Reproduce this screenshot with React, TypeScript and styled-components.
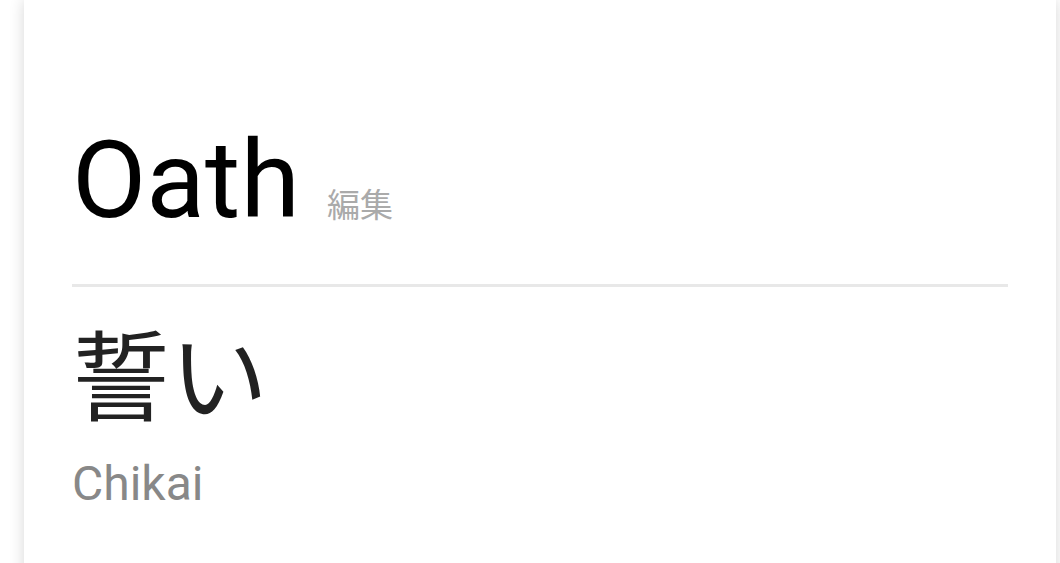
import React from "react";
import styled, { createGlobalStyle } from "styled-components";

const GlobalStyle = createGlobalStyle`
  html, body {
    margin: 0;
    padding: 0;
    background: #ffffff;
    overflow: hidden;
  }
  body {
    font-family: Roboto, "Noto Sans CJK JP", sans-serif;
  }
`;

const Page = styled.div`
  width: 1060px;
  height: 563px;
  overflow: hidden;
  background: #ffffff;
`;

const Card = styled.main`
  margin-left: 24px;
  width: 1032px;
  min-height: 700px;
  background: #ffffff;
  box-shadow: 0 0 14px rgba(0, 0, 0, 0.16);
  box-sizing: border-box;
  padding: 126px 48px 0 48px;
`;

const Header = styled.header`
  display: flex;
  align-items: baseline;
  gap: 27px;
`;

const Title = styled.h1`
  margin: 0;
  font-family: Roboto, sans-serif;
  font-weight: 400;
  font-size: 108px;
  line-height: 1;
  color: #000000;
`;

const EditLink = styled.a`
  font-family: "Noto Sans CJK JP", sans-serif;
  font-size: 33px;
  line-height: 1;
  color: #aaaaaa;
  text-decoration: none;
  cursor: pointer;
`;

const Divider = styled.hr`
  margin: 50px 0 0 0;
  border: none;
  height: 3px;
  background: #e8e8e8;
`;

const Word = styled.div`
  margin-top: 34px;
  font-family: "Noto Sans CJK JP", sans-serif;
  font-size: 98px;
  line-height: 1;
  color: #222222;
`;

const Reading = styled.div`
  margin-top: 41px;
  font-family: Roboto, sans-serif;
  font-size: 48px;
  line-height: 1;
  color: #888888;
`;

export default function App() {
  return (
    <Page>
      <GlobalStyle />
      <Card>
        <Header>
          <Title>Oath</Title>
          <EditLink>編集</EditLink>
        </Header>
        <Divider />
        <Word>誓い</Word>
        <Reading>Chikai</Reading>
      </Card>
    </Page>
  );
}
